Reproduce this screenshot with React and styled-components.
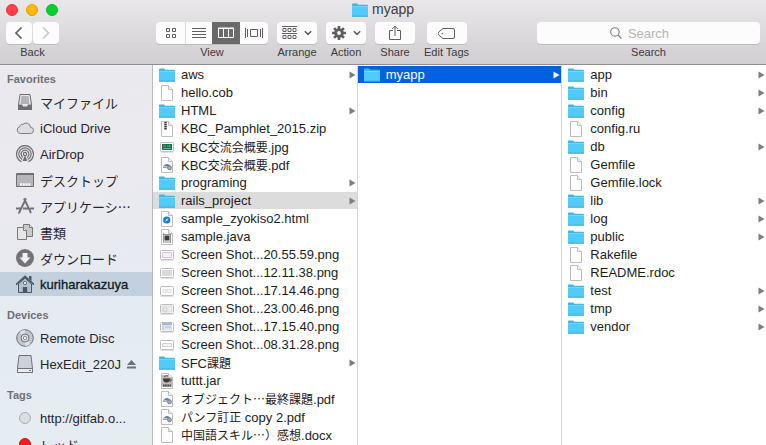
import React from "react";
import styled, { createGlobalStyle, css } from "styled-components";

const GlobalStyle = createGlobalStyle`
  *, *::before, *::after { box-sizing: border-box; }
  html, body { margin: 0; height: 100%; overflow: hidden; }
  body {
    font-family: "Liberation Sans", "Noto Sans CJK JP", sans-serif;
    font-size: 13px;
    color: #1c1c1c;
    background: #fff;
  }
  button, input { font: inherit; color: inherit; }
  svg { display: block; flex: none; }
`;

/* ---------- layout ---------- */

const Window = styled.div`
  display: flex;
  flex-direction: column;
  height: 100vh;
`;

const Header = styled.header`
  flex: none;
  padding-bottom: 4px;
  border-bottom: 1px solid #8e8d8f;
  background: linear-gradient(#e9e7e9, #d0ced0);
`;

const TitleBar = styled.div`
  display: grid;
  grid-template-columns: 1fr auto 1fr;
  align-items: center;
  height: 19px;
  padding: 0 6px;
`;

const Lights = styled.div`
  display: flex;
  gap: 8px;
`;

const Light = styled.button`
  width: 12px;
  height: 12px;
  padding: 0;
  border: 1px solid ${(p) => p.$edge};
  border-radius: 50%;
  background: ${(p) => p.$fill};
`;

const Title = styled.h1`
  display: flex;
  align-items: center;
  gap: 4px;
  margin: 0;
  font-size: 14px;
  line-height: 19px;
  font-weight: 400;
  color: #414043;
`;

const Toolbar = styled.div`
  display: flex;
  gap: 9px;
  padding: 3px 6px 0;
`;

const ToolGroup = styled.div`
  display: flex;
  flex-direction: column;
  align-items: center;
  min-width: 40px;
`;

const BackGroup = styled(ToolGroup)`
  margin-right: 88px;
`;

const SearchGroup = styled(ToolGroup)`
  flex: 0 1 223px;
  align-items: stretch;
  margin-left: auto;
`;

const ToolLabel = styled.span`
  margin-top: 1px;
  font-size: 11px;
  line-height: 15px;
  text-align: center;
  white-space: nowrap;
  color: #3b3a3d;
`;

const Segments = styled.div`
  display: flex;
  gap: ${(p) => (p.$split ? "1px" : "0")};
`;

const ToolButton = styled.button`
  display: flex;
  align-items: center;
  justify-content: center;
  gap: 7px;
  width: ${(p) => p.$width || 40}px;
  height: 22px;
  padding: 0;
  border: 0;
  border-radius: 4px;
  background: #fcfcfc;
  box-shadow: 0 1px 0 #bdbbbd;
  color: ${(p) => (p.disabled ? "#c9c9c9" : "#5f5f5f")};

  ${(p) =>
    p.$segment &&
    css`
      border-radius: 0;
      &:first-child { border-radius: 4px 0 0 4px; border-right: 1px solid #dcdcdc; }
      &:last-child { border-radius: 0 4px 4px 0; }
    `}
  ${(p) =>
    p.$active &&
    css`
      background: #6a6a6a;
      color: #fff;
    `}
`;

const SearchBox = styled.div`
  display: grid;
  align-items: center;
  height: 22px;
  border-radius: 4px;
  background: #fcfcfc;
  box-shadow: 0 1px 0 #bdbbbd;
  > * { grid-area: 1 / 1; }
  > svg { justify-self: center; margin-right: 66px; }
`;

const SearchInput = styled.input`
  width: 100%;
  height: 22px;
  padding: 0 8px;
  border: 0;
  outline: 0;
  background: transparent;
  text-align: center;
  &::placeholder { color: #b4b4b4; opacity: 1; }
`;

const Body = styled.div`
  display: flex;
  flex: 1;
  min-height: 0;
`;

/* ---------- sidebar ---------- */

const Sidebar = styled.nav`
  display: flex;
  flex: none;
  flex-direction: column;
  gap: 9px;
  width: 153px;
  padding-top: 5px;
  border-right: 1px solid #b9b9bd;
  overflow: hidden;
  background: linear-gradient(165deg, #ebe9ed 0%, #e9eaf0 45%, #e4ebf3 70%, #e6edf1 100%);
`;

const Section = styled.section`
  flex: none;
`;

const SectionTitle = styled.h2`
  margin: 0;
  padding-left: 7px;
  font-size: 11px;
  line-height: 19px;
  font-weight: 700;
  color: #707076;
`;

const Place = styled.a`
  display: flex;
  align-items: center;
  gap: 6px;
  height: 24px;
  margin: 1px 0;
  padding-left: 16px;
  white-space: nowrap;
  text-decoration: none;
  color: #26262a;
  ${(p) =>
    p.$selected &&
    css`
      background: #c3d0de;
      color: #111820;
      -webkit-text-stroke: 0.3px #111820;
    `}
`;

const PlaceRow = styled.div`
  display: flow-root;
`;

/* ---------- columns ---------- */

const Column = styled.ul`
  flex: 1 1 0;
  min-width: 0;
  margin: 0;
  padding: 1px 0 0;
  list-style: none;
  overflow: hidden;
  border-right: 1px solid #d6d6d6;
  &:last-child { border-right: 0; }
`;

const FileRow = styled.button`
  display: flex;
  align-items: center;
  width: 100%;
  height: 17px;
  margin-bottom: 1px;
  padding: 0 1px 0 6px;
  border: 0;
  text-align: left;
  color: ${(p) => (p.$tone === "blue" ? "#fff" : "#1c1c1c")};
  background: ${(p) => ({ blue: "#0060df", grey: "#dcdcdc" })[p.$tone] || "transparent"};
  > svg:last-child { color: ${(p) => (p.$tone === "blue" ? "#fff" : "#7d7d7d")}; }
`;

const FileItem = styled.li`
  display: flow-root;
`;

const FileName = styled.span`
  flex: 1;
  min-width: 0;
  margin-left: 6px;
  line-height: 17px;
  white-space: nowrap;
`;

const Cjk = styled.span`
  font-family: "Noto Sans CJK JP", sans-serif;
  font-size: 12px;
`;

const PlaceCjk = styled(Cjk)`
  font-size: 13px;
`;

const CJK_RUN = /([\u3000-\u9fff\uff00-\uffef\u2026]+)/;

function MixedText({ text, as: Run = Cjk }) {
  return text.split(CJK_RUN).map((part, i) => (i % 2 ? <Run key={i}>{part}</Run> : part));
}

/* ---------- toolbar icons ---------- */

const Chevron = ({ right }) => (
  <svg width="10" height="14" viewBox="0 0 10 14" fill="none" stroke="currentColor" strokeWidth="1.7">
    <path d={right ? "M2 1.5 7.5 7 2 12.5" : "M7.5 1.5 2 7l5.500 5.500"} />
  </svg>
);

const DownChevron = () => (
  <svg width="8" height="6" viewBox="0 0 8 6" fill="none" stroke="currentColor" strokeWidth="1.6">
    <path d="M.8 1.200 4 4.400l3.200-3.200" />
  </svg>
);

const GridIcon = () => (
  <svg width="12" height="12" viewBox="0 0 12 12" fill="none" stroke="currentColor">
    <path d="M1.500 1.500h3v3h-3zM7.500 1.500h3v3h-3zM1.500 7.500h3v3h-3zM7.500 7.500h3v3h-3z" />
  </svg>
);

const ListIcon = () => (
  <svg width="14" height="12" viewBox="0 0 14 12" stroke="currentColor">
    <path d="M0 1.500h14M0 4.500h14M0 7.500h14M0 10.500h14" />
  </svg>
);

const ColumnsIcon = () => (
  <svg width="16" height="12" viewBox="0 0 16 12" fill="none" stroke="currentColor">
    <path d="M.5 1.500h15v9H.5zM5.500 1.500v9M10.500 1.500v9" />
    <path d="M0 1h16" />
  </svg>
);

const CoverIcon = () => (
  <svg width="18" height="12" viewBox="0 0 18 12" fill="none" stroke="currentColor">
    <path d="M.5 1v10M2.500 2v8M5.500 2.500h7v7h-7zM15.500 2v8M17.500 1v10" />
  </svg>
);

const ArrangeIcon = () => (
  <svg width="15" height="14" viewBox="0 0 15 14" fill="none" stroke="currentColor">
    <path d="M0 .5h15M0 7.500h15M1 2.500h3v3H1zM6 2.500h3v3H6zM11 2.500h3v3h-3zM1 9.500h3v3H1zM6 9.500h3v3H6zM11 9.500h3v3h-3z" />
  </svg>
);

const GearIcon = () => (
  <svg width="14" height="14" viewBox="0 0 14 14">
    <g stroke="currentColor" strokeWidth="2.600">
      <path d="M7 0v14M0 7h14M2.050 2.050l9.900 9.900M11.950 2.050l-9.900 9.900" />
    </g>
    <circle cx="7" cy="7" r="4.800" fill="currentColor" />
    <circle cx="7" cy="7" r="1.900" fill="#fcfcfc" />
  </svg>
);

const ShareIcon = () => (
  <svg width="12" height="16" viewBox="0 0 12 16" fill="none" stroke="currentColor">
    <path d="M4 5.500H.5v9h11v-9H8M6 11V1.200M3.200 4 6 1.200 8.800 4" />
  </svg>
);

const TagIcon = () => (
  <svg width="17" height="11" viewBox="0 0 17 11" fill="none" stroke="currentColor">
    <path d="M5 .5h10a1.500 1.500 0 0 1 1.500 1.500v7a1.500 1.500 0 0 1-1.500 1.500H5L1 7.300a2.600 2.600 0 0 1 0-3.600z" />
    <circle cx="4.300" cy="5.500" r=".7" fill="currentColor" stroke="none" />
  </svg>
);

const SearchIcon = () => (
  <svg width="12" height="12" viewBox="0 0 12 12" fill="none" stroke="#7c7c7c" strokeWidth="1.100">
    <circle cx="4.900" cy="4.900" r="4.200" />
    <path d="m8 8 3.500 3.500" />
  </svg>
);

/* ---------- file icons ---------- */

const FolderIcon = () => (
  <svg width="16" height="14" viewBox="0 0 16 14">
    <path d="M0 1.500Q0 .5 1 .5h4.200l1 1.200H15q1 0 1 1V13H0z" fill="#3fb4e0" />
    <path d="M0 3h16v10.500H0z" fill="#50cbfa" />
    <path d="M0 3.400h16" stroke="#7edcff" strokeWidth=".8" />
    <path d="M0 13.200h16" stroke="#329cc4" strokeWidth=".8" />
  </svg>
);

const art = {
  doc: null,
  zip: <path d="M6.500 1v8" stroke="#333" strokeWidth="2.400" strokeDasharray="1.400 .5" />,
  pdf: (
    <>
      <path d="M4 11q1-4 4-4t3 3z" fill="#5780c2" />
      <path d="M4.500 9.500h4" stroke="#d3c3a0" />
      <circle cx="10.500" cy="10.800" r="2" fill="#a2aab8" stroke="#68758c" strokeWidth=".8" />
    </>
  ),
  html: (
    <>
      <circle cx="7.700" cy="9" r="3.600" fill="#1878d8" />
      <path d="m6 10.700 1.200-2.400 2.200-1-1.200 2.400z" fill="#dcefff" />
    </>
  ),
  java: (
    <>
      <path d="M4 5.500h8M4 13h8M4.500 4v9M11.500 4v10" stroke="#777" strokeWidth=".8" />
      <path d="M5.500 6.500h5v5h-5z" fill="#3d3d3d" />
    </>
  ),
  jar: (
    <>
      <path d="M3 2h7l3 3v9H3z" fill="#bbb" />
      <path d="M4 5.500h7q0 4-3.500 4T4 5.500z" fill="#43372c" />
      <path d="M11 6q2 0 1 2h-2M5 4q2-2 4-1" fill="none" stroke="#555" />
      <path d="M4 12.500h8" stroke="#444" strokeWidth="2" strokeDasharray="1.600 .6" />
    </>
  ),
};

const PageIcon = ({ kind }) => (
  <svg width="16" height="16" viewBox="0 0 16 16">
    <path d="M2.500.5h7l4 4v11h-11z" fill="#fdfdfd" stroke="#bdbdbd" />
    {art[kind]}
    <path d="M9.500.5v4h4" fill="#f1f1f1" stroke="#bdbdbd" />
  </svg>
);

const shots = {
  photo: (
    <>
      <path d="M3 5h10v6H3z" fill="#13714f" />
      <path d="M4 6h3v2H4z" fill="#c7503e" />
      <path d="M8 7h4M4 9.500h8" stroke="#5cd0a0" strokeWidth=".8" />
    </>
  ),
  pink: <path d="M3.500 5.500h9v5h-9z" fill="#f4eef7" stroke="#cfaed2" strokeWidth=".7" />,
  grey: <path d="M3 5h10v6H3z" fill="#dadada" />,
  light: <path d="M4 6.500h3v3H4zM8 6.500h4v3H8z" fill="#f3f3f3" stroke="#d0d0d0" strokeWidth=".6" />,
  left: <path d="M3 5h10v6H3zM4.500 7H8v3H4.500z" fill="#ededed" stroke="#c4c4c4" strokeWidth=".6" />,
  window: (
    <>
      <path d="M3 4.500h10v7H3z" fill="#e1e7ee" />
      <path d="M3 5h10" stroke="#5d84b6" />
      <path d="M4 7v4M6 8h6" stroke="#aab6c4" strokeWidth=".8" />
    </>
  ),
  bar: <path d="M3.500 6.500h9v3h-9z" fill="#f4f4f4" stroke="#c0c0c0" strokeWidth=".7" />,
};

const ShotIcon = ({ kind }) => (
  <svg width="16" height="16" viewBox="0 0 16 16">
    <rect x="1.500" y="3.500" width="13" height="9" rx="1" fill="#fff" stroke="#bcbcbc" />
    {shots[kind]}
    <path d="M1.500 13.200h13" stroke="#c9c9c9" strokeWidth=".8" />
  </svg>
);

const Arrow = () => (
  <svg width="7" height="8" viewBox="0 0 7 8">
    <path d="M.5.5 6.500 4l-6 3.500z" fill="currentColor" />
  </svg>
);

function FileIcon({ kind }) {
  if (kind === "folder") return <FolderIcon />;
  if (kind in shots) return <ShotIcon kind={kind} />;
  return <PageIcon kind={kind} />;
}

/* ---------- sidebar icons ---------- */

const placeIcons = {
  files: (
    <>
      <path d="M4 1.500h10l1.500 10v5h-13v-5z" fill="#e6e6e9" stroke="#6e6e73" />
      <path d="M5.500 4h7M5 6h8M5 8h8M4.500 10h9" stroke="#77777c" strokeWidth=".9" />
      <path d="M2 11.500h4l1 2h4l1-2h4V17H2z" fill="#6e6e73" />
    </>
  ),
  cloud: (
    <path
      d="M4.500 14.500a3.500 3.500 0 0 1-.6-6.900 2.300 2.300 0 0 1 3-2.200 4.400 4.400 0 0 1 7.600 2.900 3.100 3.100 0 0 1-.2 6.200z"
      fill="#dedee2"
      stroke="#7c7c82"
    />
  ),
  airdrop: (
    <g fill="none" stroke="#6e6e73" strokeWidth="1.200">
      <path d="M5.500 16.700a8.400 8.400 0 1 1 7 0M6.300 14.500a6.100 6.100 0 1 1 5.400 0M7 12.400a3.900 3.900 0 1 1 4 0" />
      <circle cx="9" cy="9" r="1.600" />
      <path d="M9 10.500 6.500 16h5z" fill="#6e6e73" stroke="none" />
    </g>
  ),
  desktop: (
    <>
      <path d="M.5 2.500h17v13H.5z" fill="#b5b5ba" stroke="#6e6e73" />
      <path d="M1 3.500h16" stroke="#6e6e73" />
      <path d="M4 13.500h11" stroke="#fff" strokeWidth="2.500" strokeDasharray="2 .8" />
    </>
  ),
  apps: (
    <>
      <path d="M10 1.500 3 16M8 1.500 15 16" fill="none" stroke="#717176" strokeWidth="1.900" />
      <path d="M0 11.500h5M7 11.500h5M14 11.500h4" stroke="#717176" strokeWidth="2" />
      <path d="m2.700 14.500-.5 3 2-2" fill="#717176" />
    </>
  ),
  docs: (
    <>
      <path d="M7.500 1.500h6l3 3v9h-9z" fill="#cacacd" stroke="#77777c" />
      <path d="M13.500 1.500v3h3" fill="#f2f2f4" stroke="#77777c" />
      <path d="M1.500 4.500h6l3 3v9h-9z" fill="#e6e6ea" stroke="#77777c" />
      <path d="M7.500 4.500v3h3" fill="#f6f6f8" stroke="#77777c" />
    </>
  ),
  down: (
    <>
      <circle cx="9" cy="9" r="9" fill="#737378" />
      <path d="M6.500 4h5v4.500h3L9 14.500 3.500 8.500h3z" fill="#f1f2f5" />
    </>
  ),
  home: (
    <>
      <path d="M2.500 9v8.500h13V9L9 3z" fill="#b4c0cc" stroke="#4b5763" />
      <path d="M0 9.700 9 1.500l9 8.200" fill="none" stroke="#4b5763" strokeWidth="1.700" />
      <path d="M13 1h2.500v5L13 4zM6.800 12h4.400v5.500H6.800z" fill="#4b5763" />
      <circle cx="9" cy="8" r="1.700" fill="#e3e9ef" stroke="#4b5763" strokeWidth=".8" />
    </>
  ),
  disc: (
    <>
      <circle cx="9" cy="9" r="8.300" fill="#c3c7cc" stroke="#6f7379" />
      <path d="M9 9 3.500 3A8 8 0 0 1 9 1zM9 9l5.500 6A8 8 0 0 1 9 17z" fill="#dde1e5" />
      <circle cx="9" cy="9" r="4" fill="#dbdfe3" stroke="#73777d" />
      <circle cx="9" cy="9" r="1.700" fill="#f2f5f8" stroke="#73777d" strokeWidth=".8" />
    </>
  ),
  drive: (
    <>
      <path d="M3 .5h12l1.500 13v4h-15v-4z" fill="#cdd2d6" stroke="#6d7278" />
      <path d="M1.500 13.500h15v4h-15z" fill="#e9edef" stroke="#6d7278" />
      <path d="M13 15.500h2" stroke="#6d7278" />
    </>
  ),
  grey: <circle cx="9" cy="9" r="5.500" fill="#dcdfe1" stroke="#a9acae" />,
  red: <circle cx="9" cy="9" r="5.500" fill="#f01c20" stroke="#d81418" />,
};

const PlaceIcon = ({ kind }) => (
  <svg width="18" height="18" viewBox="0 0 18 18">
    {placeIcons[kind]}
  </svg>
);

const EjectIcon = () => (
  <svg width="9" height="9" viewBox="0 0 9 9" fill="#6b7076">
    <path d="M4.500 0 9 5H0zM0 6.500h9v2H0z" />
  </svg>
);

/* ---------- data ---------- */

const sections = [
  {
    title: "Favorites",
    places: [
      ["files", "マイファイル"],
      ["cloud", "iCloud Drive"],
      ["airdrop", "AirDrop"],
      ["desktop", "デスクトップ"],
      ["apps", "アプリケーシ…"],
      ["docs", "書類"],
      ["down", "ダウンロード"],
      ["home", "kuriharakazuya", { selected: true }],
    ],
  },
  {
    title: "Devices",
    places: [
      ["disc", "Remote Disc"],
      ["drive", "HexEdit_220J", { eject: true }],
    ],
  },
  {
    title: "Tags",
    places: [
      ["grey", "http://gitfab.o..."],
      ["red", "レッド"],
    ],
  },
];

const columns = [
  [
    ["folder", "aws"],
    ["doc", "hello.cob"],
    ["folder", "HTML"],
    ["zip", "KBC_Pamphlet_2015.zip"],
    ["photo", "KBC交流会概要.jpg"],
    ["pdf", "KBC交流会概要.pdf"],
    ["folder", "programing"],
    ["folder", "rails_project", "grey"],
    ["html", "sample_zyokiso2.html"],
    ["java", "sample.java"],
    ["pink", "Screen Shot...20.55.59.png"],
    ["grey", "Screen Shot...12.11.38.png"],
    ["light", "Screen Shot...17.14.46.png"],
    ["left", "Screen Shot...23.00.46.png"],
    ["window", "Screen Shot...17.15.40.png"],
    ["bar", "Screen Shot...08.31.28.png"],
    ["folder", "SFC課題"],
    ["jar", "tuttt.jar"],
    ["pdf", "オブジェクト…最終課題.pdf"],
    ["pdf", "パンフ訂正 copy 2.pdf"],
    ["doc", "中国語スキル…）感想.docx"],
  ],
  [["folder", "myapp", "blue"]],
  [
    ["folder", "app"],
    ["folder", "bin"],
    ["folder", "config"],
    ["doc", "config.ru"],
    ["folder", "db"],
    ["doc", "Gemfile"],
    ["doc", "Gemfile.lock"],
    ["folder", "lib"],
    ["folder", "log"],
    ["folder", "public"],
    ["doc", "Rakefile"],
    ["doc", "README.rdoc"],
    ["folder", "test"],
    ["folder", "tmp"],
    ["folder", "vendor"],
  ],
];

/* ---------- page ---------- */

export default function App() {
  return (
    <Window>
      <GlobalStyle />
      <Header>
        <TitleBar>
          <Lights>
            <Light aria-label="Close" $fill="#ff4149" $edge="#e5303a" />
            <Light aria-label="Minimize" $fill="#ffb900" $edge="#e2a000" />
            <Light aria-label="Zoom" $fill="#00d22e" $edge="#0bb52b" />
          </Lights>
          <Title>
            <FolderIcon />
            myapp
          </Title>
        </TitleBar>
        <Toolbar>
          <BackGroup>
            <Segments $split>
              <ToolButton $width={26} aria-label="Back"><Chevron /></ToolButton>
              <ToolButton $width={26} aria-label="Forward" disabled><Chevron right /></ToolButton>
            </Segments>
            <ToolLabel>Back</ToolLabel>
          </BackGroup>
          <ToolGroup>
            <Segments>
              <ToolButton $segment $width={30} aria-label="Icon view"><GridIcon /></ToolButton>
              <ToolButton $segment $width={26} aria-label="List view"><ListIcon /></ToolButton>
              <ToolButton $segment $width={28} $active aria-label="Column view"><ColumnsIcon /></ToolButton>
              <ToolButton $segment $width={28} aria-label="Cover flow view"><CoverIcon /></ToolButton>
            </Segments>
            <ToolLabel>View</ToolLabel>
          </ToolGroup>
          <ToolGroup>
            <ToolButton aria-label="Arrange"><ArrangeIcon /><DownChevron /></ToolButton>
            <ToolLabel>Arrange</ToolLabel>
          </ToolGroup>
          <ToolGroup>
            <ToolButton aria-label="Action"><GearIcon /><DownChevron /></ToolButton>
            <ToolLabel>Action</ToolLabel>
          </ToolGroup>
          <ToolGroup>
            <ToolButton aria-label="Share"><ShareIcon /></ToolButton>
            <ToolLabel>Share</ToolLabel>
          </ToolGroup>
          <ToolGroup>
            <ToolButton aria-label="Edit Tags"><TagIcon /></ToolButton>
            <ToolLabel>Edit Tags</ToolLabel>
          </ToolGroup>
          <SearchGroup>
            <SearchBox>
              <SearchIcon />
              <SearchInput id="search" type="text" placeholder="Search" />
            </SearchBox>
            <ToolLabel as="label" htmlFor="search">Search</ToolLabel>
          </SearchGroup>
        </Toolbar>
      </Header>
      <Body>
        <Sidebar>
          {sections.map((section) => (
            <Section key={section.title}>
              <SectionTitle>{section.title}</SectionTitle>
              {section.places.map(([icon, name, opts = {}]) => (
                <PlaceRow key={name}>
                  <Place href="#" $selected={opts.selected}>
                    <PlaceIcon kind={icon} />
                    <span><MixedText text={name} as={PlaceCjk} /></span>
                    {opts.eject && <EjectIcon />}
                  </Place>
                </PlaceRow>
              ))}
            </Section>
          ))}
        </Sidebar>
        {columns.map((files, i) => (
          <Column key={i}>
            {files.map(([kind, name, tone]) => (
              <FileItem key={name}>
                <FileRow $tone={tone}>
                  <FileIcon kind={kind} />
                  <FileName><MixedText text={name} /></FileName>
                  {kind === "folder" && <Arrow />}
                </FileRow>
              </FileItem>
            ))}
          </Column>
        ))}
      </Body>
    </Window>
  );
}
